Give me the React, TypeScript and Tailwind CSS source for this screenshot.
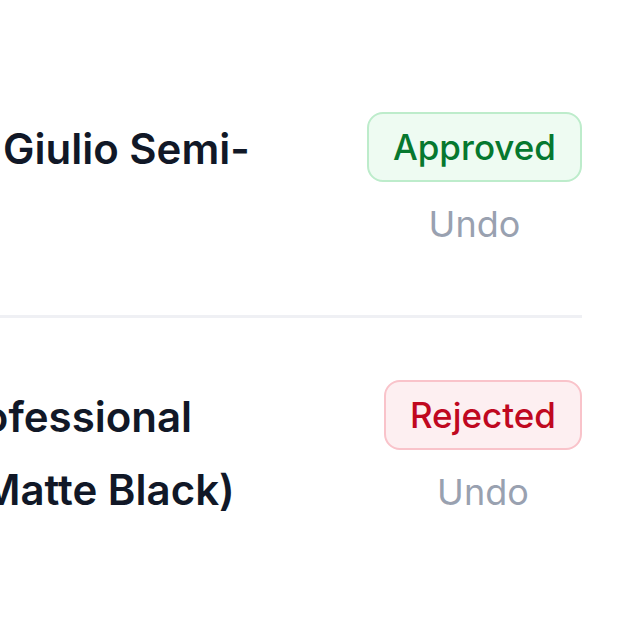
const rows = [
  {
    lines: [{ text: 'Giulio Semi-', shift: 'ml-[3px]' }],
    status: 'approved' as const,
    pad: 'pt-[112px] pb-[67px]',
  },
  {
    lines: [
      { text: 'Professional', shift: '-ml-[60px]' },
      { text: '(Matte Black)', shift: '-ml-[34px]' },
    ],
    status: 'rejected' as const,
    pad: 'pt-[62px] pb-[60px]',
  },
];

function StatusBadge({ status }: { status: 'approved' | 'rejected' }) {
  if (status === 'approved') {
    return (
      <span className="flex h-[70px] items-center rounded-[16px] border-2 border-[#bdeccb] bg-[#eefbf2] px-[24px] text-[35px] font-medium text-[#06782f]">
        Approved
      </span>
    );
  }
  return (
    <span className="flex h-[70px] items-center rounded-[16px] border-2 border-[#f9c3ca] bg-[#fdeff1] px-[24px] text-[35px] font-medium text-[#c0081f]">
      Rejected
    </span>
  );
}

export default function App() {
  return (
    <div className="min-h-screen overflow-hidden bg-white font-['Inter',sans-serif]">
      <div className="pr-[54px]">
        {rows.map((row, i) => (
          <div key={i}>
            {i > 0 && <div className="h-[3px] bg-[#eff0f4]" />}
            <div className={`flex items-start justify-between ${row.pad}`}>
              <div className="min-w-0 flex-1 overflow-hidden text-[42px] font-semibold leading-[73px] text-[#111827]">
                {row.lines.map((line) => (
                  <div key={line.text} className={`whitespace-nowrap ${line.shift}`}>
                    {line.text}
                  </div>
                ))}
              </div>
              <div className="flex flex-col items-center gap-[18px]">
                <StatusBadge status={row.status} />
                <button className="text-[36px] leading-[48px] text-[#99a1b0]">Undo</button>
              </div>
            </div>
          </div>
        ))}
      </div>
    </div>
  );
}
